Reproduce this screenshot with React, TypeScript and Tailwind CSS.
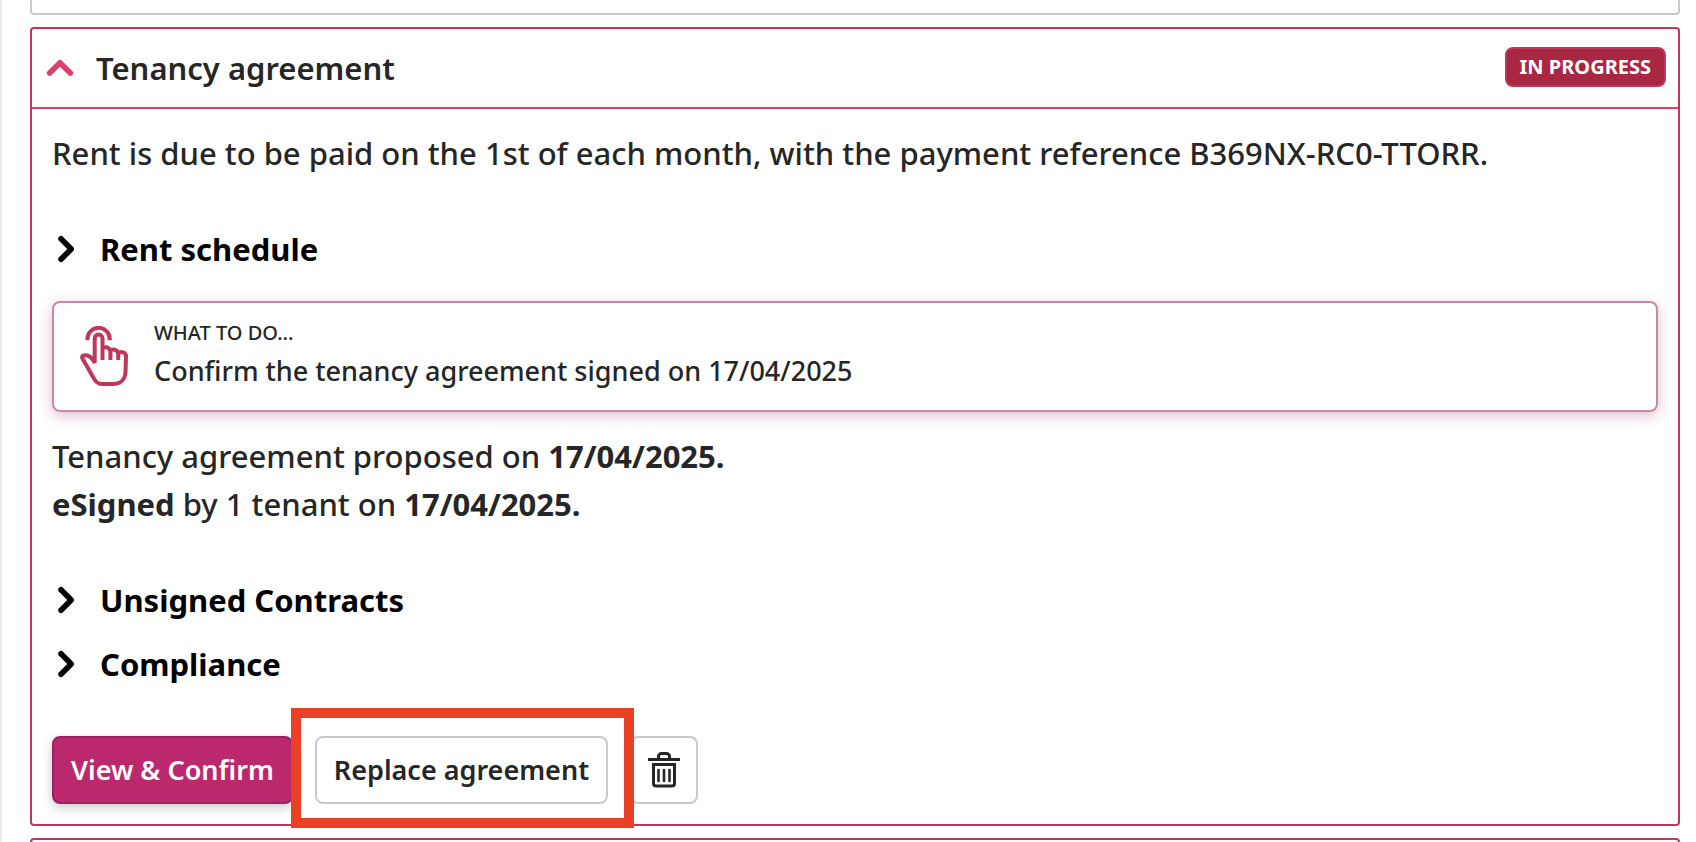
import { useState } from "react";

interface DisclosureProps {
  title: string;
}

/*** Chevron used by every collapsible row ***/
function Chevron({ className }: { className: string }) {
  return (
    <svg viewBox="0 0 20 28" fill="none" aria-hidden="true" className={className}>
      <path
        d="M5 3.7 15.2 14 5 24.3"
        stroke="currentColor"
        strokeWidth="5.6"
        strokeLinecap="round"
        strokeLinejoin="round"
      />
    </svg>
  );
}

/*** Tapping hand ***/
function TapIcon() {
  return (
    <svg
      viewBox="0 0 48 60"
      fill="none"
      stroke="currentColor"
      strokeWidth="4"
      aria-hidden="true"
      className="h-[60px] w-12 shrink-0 text-[#bf375b]"
    >
      <path d="M7.4 14.2V13a11.2 11.2 0 0 1 22.4 0v1.2" />
      <path d="M22.5 34V12.5a3.9 3.9 0 0 0-7.8 0V37c-2.2-4.8-5.6-8.2-10-7.8-2.2.2-3.2 1.4-2.2 3.4l11.8 20.6c2 3.2 4.4 4.8 8 4.8h10.2c7.5 0 12.6-4.2 13-11.5L46 30.5c0-3.2-2.2-4.5-4.4-4.5-1.6 0-3 .7-3.6 2" />
      <path d="M22.5 22c4.6-1.8 7.9.2 7.9 4.5V34" />
      <path d="M30.4 24c4.6-1.5 7.8.4 7.8 4.5V34" />
    </svg>
  );
}

/*** Waste bin ***/
function BinIcon() {
  return (
    <svg
      viewBox="0 0 32 36"
      fill="none"
      stroke="currentColor"
      strokeWidth="3"
      aria-hidden="true"
      className="h-9 w-8"
    >
      <path d="M0 7.5h32M10.5 7V4.5a3 3 0 0 1 3-3h5a3 3 0 0 1 3 3V7" />
      <path d="M5.5 12.5h21v19a2.5 2.5 0 0 1-2.5 2.5H8a2.5 2.5 0 0 1-2.5-2.5z" />
      <path d="M10.5 18v11M16 18v11M21.5 18v11" strokeWidth="2.6" strokeLinecap="round" />
    </svg>
  );
}

/*** Closed sub section of the agreement ***/
function Disclosure({ title }: DisclosureProps) {
  const [open, setOpen] = useState(false);

  return (
    <h3>
      <button
        type="button"
        aria-expanded={open}
        onClick={() => setOpen(!open)}
        className="flex h-12 items-center gap-6 pl-1 text-[31px] font-bold text-black"
      >
        <Chevron className={open ? "h-7 w-5 rotate-90" : "h-7 w-5"} />
        {title}
      </button>
    </h3>
  );
}

export default function App() {
  const [open, setOpen] = useState(true);

  return (
    <div className="h-screen overflow-hidden border-l-2 border-[#ededed] bg-white pl-7 pr-4 font-['Noto_Sans',sans-serif] font-medium text-[#262626]">
      {/*** Previous section ***/}
      <div className="h-[15px] rounded-b border-2 border-t-0 border-[#c9c9c9]" />

      <section className="mt-3 rounded border-2 border-[#bf375b]">
        <header className="flex h-20 items-center justify-between border-b-2 border-[#dc3f6b] pl-[14px] pr-3">
          <h2>
            <button
              type="button"
              aria-expanded={open}
              onClick={() => setOpen(!open)}
              className="flex items-center gap-[22px] text-[31px] font-semibold leading-[48px]"
            >
              <span className="flex w-7 justify-center text-[#dc3f6b]">
                <Chevron className={open ? "h-7 w-5 -rotate-90" : "h-7 w-5"} />
              </span>
              Tenancy agreement
            </button>
          </h2>
          <span className="mb-0.5 flex h-10 items-center rounded-lg border-2 border-[#bf375b] bg-[#a82743] px-[13px] text-xl font-bold text-white">
            IN PROGRESS
          </span>
        </header>

        {open && (
          <div className="p-5">
            <p className="text-[31px] leading-[48px]">
              Rent is due to be paid on the 1st of each month, with the payment reference B369NX-RC0-TTORR.
            </p>

            <div className="mt-12">
              <Disclosure title="Rent schedule" />
            </div>

            {/*** Next action ***/}
            <div className="mt-7 flex h-[111px] items-center gap-[26px] rounded-lg border-2 border-[#c888a6] px-[26px] pb-0.5 shadow-[0_4px_14px_rgba(150,40,100,0.3)]">
              <TapIcon />
              <div className="pb-0.5">
                <p className="text-xl leading-8">WHAT TO DO...</p>
                <p className="text-[27px] leading-[44px]">Confirm the tenancy agreement signed on 17/04/2025</p>
              </div>
            </div>

            <p className="mt-5 text-[31px] leading-[48px]">
              Tenancy agreement proposed on <strong className="font-bold">17/04/2025.</strong>
              <br />
              <strong className="font-bold">eSigned</strong> by 1 tenant on{" "}
              <strong className="font-bold">17/04/2025.</strong>
            </p>

            <div className="mt-12 flex flex-col gap-4">
              <Disclosure title="Unsigned Contracts" />
              <Disclosure title="Compliance" />
            </div>

            {/*** Actions ***/}
            <div className="mt-12 flex gap-[22px] text-[27px] font-semibold">
              <button
                type="button"
                className="h-[68px] rounded-lg border-2 border-[#9c2160] bg-[#bb286d] px-[17px] text-white shadow-[0_4px_12px_rgba(0,0,0,0.2)]"
              >
                View &amp; Confirm
              </button>
              <div className="relative">
                <button type="button" className="h-[68px] rounded-lg border-2 border-[#c9c9c9] bg-white px-[17px]">
                  Replace agreement
                </button>
                <span className="pointer-events-none absolute -bottom-6 -left-6 -right-[26px] -top-7 border-10 border-[#ea4025]" />
              </div>
              <button
                type="button"
                aria-label="Delete agreement"
                className="h-[68px] rounded-lg border-2 border-[#c9c9c9] bg-white px-4"
              >
                <BinIcon />
              </button>
            </div>
          </div>
        )}
      </section>

      {/*** Next section ***/}
      <div className="mt-3 h-20 rounded border-2 border-[#bf375b]" />
    </div>
  );
}
